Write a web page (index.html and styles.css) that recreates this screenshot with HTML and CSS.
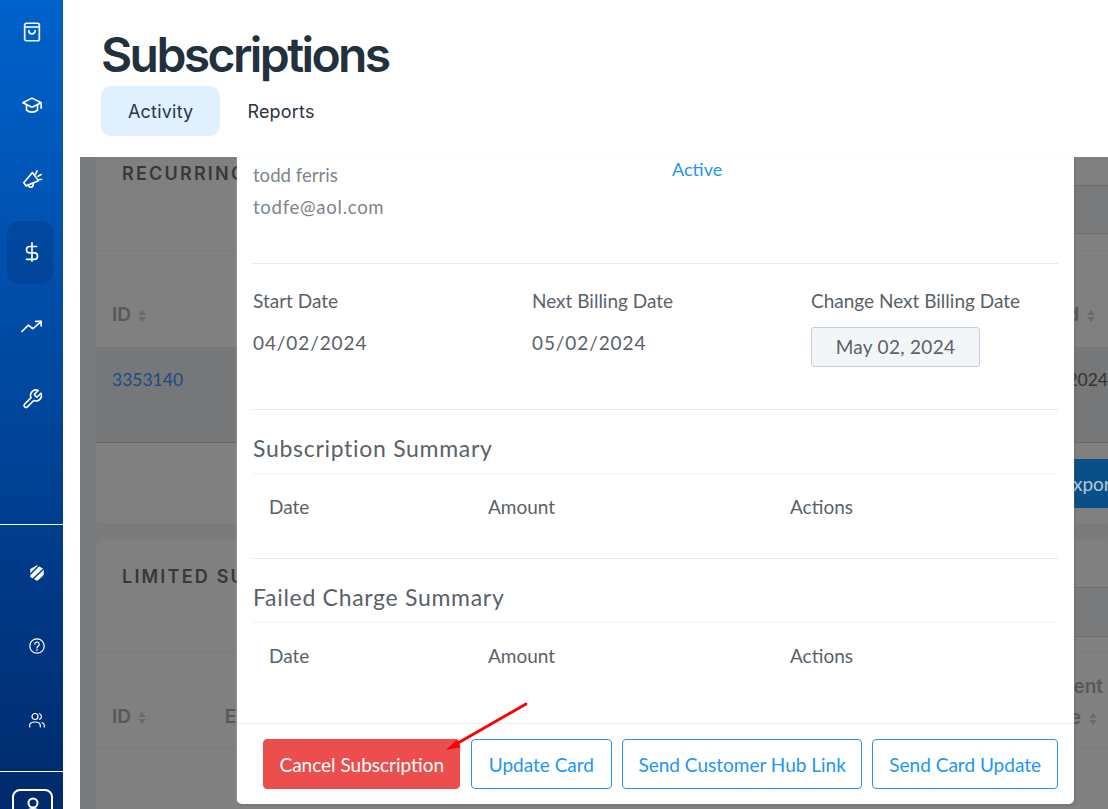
FILE: index.html
```html
<!DOCTYPE html>
<html lang="en">
<head>
<meta charset="utf-8">
<title>Subscriptions</title>
<link rel="stylesheet" href="styles.css">
</head>
<body>
<div class="app">
  <aside class="sidebar">
    <nav class="nav-top">
      <a class="nav-item"><svg class="ico" viewBox="0 0 24 24"><path d="M6 2.500h12a2 2 0 0 1 2 2v15a2 2 0 0 1-2 2H6a2 2 0 0 1-2-2v-15a2 2 0 0 1 2-2zM4 6.500h16M8.500 10.500a3.500 3.500 0 0 0 7 0"/></svg></a>
      <a class="nav-item"><svg class="ico" viewBox="0 0 24 24"><path d="M12 4.500 2 9.500l10 5 10-5zM6 12v5.500c3 3 9 3 12 0V12M22 9.500v6"/></svg></a>
      <a class="nav-item"><svg class="ico" viewBox="0 0 24 24"><path d="M12.500 5 19 14 5.500 19.500 3 16zM8 18.500c.5 3.500 5 3.500 5.500-1M16 6.500l1.500-3.500M18.500 9l3.500-2M20 12.500h2.500"/></svg></a>
      <a class="nav-item active"><svg class="ico" viewBox="0 0 24 24"><path d="M12 2v20M17 6H9.500a3.500 3.500 0 0 0 0 7h5a3.500 3.500 0 0 1 0 7H6"/></svg></a>
      <a class="nav-item"><svg class="ico" viewBox="0 0 24 24"><path d="M1 18l7-7 5 4 9-8M16 7h6v5"/></svg></a>
      <a class="nav-item"><svg class="ico" viewBox="0 0 24 24"><path d="M15 6.500a1 1 0 0 0 0 1.400l1.600 1.600a1 1 0 0 0 1.400 0l3.800-3.800a6 6 0 0 1-7.900 7.900l-6.900 6.900a2.100 2.100 0 0 1-3-3l6.900-6.900a6 6 0 0 1 7.900-7.900z"/></svg></a>
    </nav>
    <nav class="nav-bottom">
      <a class="nav-item small"><svg class="ico-s" viewBox="0 0 16 16"><path class="solid" d="M8 .3 14.700 4v8L8 15.700 1.300 12V4z"/><path class="cut" d="M1 9.500 10.500 0M4 14 15 3.500M10 15.500l5.500-5.500"/></svg></a>
      <a class="nav-item small"><svg class="ico-s" viewBox="0 0 16 16"><circle cx="8" cy="8" r="7.200"/><path d="M5.800 6.200a2.200 2.200 0 1 1 3.400 1.900C8.400 8.600 8 9 8 10M8 11.500v1"/></svg></a>
      <a class="nav-item small"><svg class="ico-s" viewBox="0 0 16 16"><circle cx="6" cy="4.500" r="3"/><path d="M.7 15v-1.500C.7 11 2.500 10 6 10s5.300 1 5.300 3.500V15M10.500 1.700a3 3 0 0 1 0 5.600M13 10.500c1.500.5 2.300 1.500 2.300 3V15"/></svg></a>
    </nav>
    <div class="profile"><svg class="ico-p" viewBox="0 0 16 16"><circle cx="8" cy="6" r="4.500"/><path d="M1 18c0-4 3-6 7-6s7 2 7 6"/></svg></div>
  </aside>
  <main class="main">
    <header class="header">
      <h1 class="title">Subscriptions</h1>
      <div class="tabs">
        <a class="tab tab-on">Activity</a>
        <a class="tab">Reports</a>
      </div>
    </header>
    <section class="content">
      <div class="card card-a">
        <div class="card-head">
          <h2 class="card-title">RECURRING</h2>
          <div class="search"></div>
        </div>
        <div class="thead">
          <span class="th">ID <i class="sort"></i></span>
          <span class="th th-right"><b class="th-cut">d</b><i class="sort"></i></span>
        </div>
        <div class="trow">
          <a class="cell-id">3353140</a>
          <span class="cell-end">2024</span>
        </div>
        <div class="card-foot"><span class="export">Export</span></div>
      </div>
      <div class="card card-b">
        <div class="card-head">
          <h2 class="card-title">LIMITED SUBSCRIPTIONS</h2>
          <div class="search"></div>
        </div>
        <div class="thead">
          <span class="th">ID <i class="sort"></i></span>
          <span class="th th-e">Email</span>
          <span class="th th-two">Payment<br><span class="th-date">Date<i class="sort"></i></span></span>
        </div>
      </div>
    </section>
    <div class="modal">
      <div class="modal-body">
        <div class="row-customer">
          <div class="cust">
            <p class="cust-line">todd ferris</p>
            <p class="cust-line cust-mail">todfe@aol.com</p>
          </div>
          <div class="status">Active</div>
        </div>
        <div class="row-dates">
          <div class="col"><div class="lbl">Start Date</div><div class="val">04/02/2024</div></div>
          <div class="col"><div class="lbl">Next Billing Date</div><div class="val">05/02/2024</div></div>
          <div class="col"><div class="lbl">Change Next Billing Date</div><div class="date-input">May 02, 2024</div></div>
        </div>
        <div class="summary">
          <h3 class="sum-title">Subscription Summary</h3>
          <div class="sum-head"><span>Date</span><span>Amount</span><span>Actions</span></div>
        </div>
        <div class="summary summary-last">
          <h3 class="sum-title">Failed Charge Summary</h3>
          <div class="sum-head"><span>Date</span><span>Amount</span><span>Actions</span></div>
        </div>
      </div>
      <div class="modal-foot">
        <button class="btn btn-danger">Cancel Subscription</button>
        <button class="btn btn-update">Update Card</button>
        <button class="btn btn-hub">Send Customer Hub Link</button>
        <button class="btn">Send Card Update</button>
      </div>
    </div>
    <svg class="arrow" viewBox="0 0 90 60" width="90" height="60"><path class="arrow-line" d="M85 4 17 43"/><path class="arrow-head" d="M5 50 15.300 40 19.700 47.300z"/></svg>
  </main>
</div>
</body>
</html>
```
FILE: styles.css
```css
* { box-sizing: border-box; }
html, body { margin: 0; height: 100%; overflow: hidden; background: #fff; }
.app { display: flex; height: 809px; font-family: "Lato", "Noto Sans", sans-serif; }

.sidebar { width: 63px; flex: none; height: 809px; overflow: hidden; display: flex; flex-direction: column; background: linear-gradient(180deg, #0062cc 0%, #002a6c 100%); }
.nav-top { flex: none; height: 525px; border-bottom: 1px solid #fff; display: flex; flex-direction: column; align-items: flex-start; padding-left: 7px; }
.nav-item { flex: none; display: flex; align-items: center; justify-content: center; width: 46px; height: 63px; padding-left: 3px; margin-bottom: 10.500px; border-radius: 12px; }
.nav-item.active { background: rgba(0, 40, 100, .25); }
.ico { width: 22px; height: 22px; fill: none; stroke: #fff; stroke-width: 1.800; stroke-linecap: round; stroke-linejoin: round; }
.ico-s { width: 16px; height: 16px; fill: none; stroke: #fff; stroke-width: 1.200; stroke-linecap: round; }
.ico-s .solid { fill: #fff; stroke: none; }
.ico-s .cut { stroke: #003f8c; stroke-width: 1.500; stroke-linecap: butt; }
.ico-p { width: 16px; height: 16px; fill: none; stroke: #fff; stroke-width: 2; }
.nav-bottom { flex: none; height: 247px; border-bottom: 1px solid #fff; display: flex; flex-direction: column; align-items: flex-start; padding: 16px 0 0 7px; }
.nav-item.small { padding-left: 13px; }
.profile { flex: none; width: 41px; height: 40px; margin: 17px 0 0 12px; border: 2px solid #fff; border-radius: 8px; display: flex; justify-content: center; padding-top: 6px; }

.main { flex: 1; min-width: 0; position: relative; display: flex; flex-direction: column; }
.header { flex: none; height: 157px; padding: 29px 0 0 38px; background: #fff; }
.title { margin: 0; font: 600 48px/52px "Inter", sans-serif; letter-spacing: -2.600px; color: #23303e; }
.tabs { display: flex; margin-top: 5px; }
.tab { height: 50px; padding: 0 27px; display: flex; align-items: center; border-radius: 10px; font: 400 18px "Inter", sans-serif; letter-spacing: .2px; color: #2b3540; }
.tab-on { background: #e0f0ff; }

.content { flex: 1; min-height: 0; margin-left: 17px; background: #7a7b7c; padding-left: 16px; overflow: hidden; }
.card { background: #808080; border-radius: 6px; border-bottom: 1px solid #777879; }
.card-a { height: 368px; border-radius: 0 0 6px 6px; }
.card-b { margin-top: 15px; height: 300px; }
.card-head { display: flex; justify-content: space-between; align-items: flex-start; height: 94px; border-bottom: 1px solid #797a7b; }
.card-b .card-head { height: 113px; }
.card-title { margin: 3px 0 0 26px; width: 115px; overflow: hidden; font: 600 18px/27px "Inter", sans-serif; letter-spacing: 2.200px; color: #36383a; white-space: nowrap; }
.card-b .card-title { margin-top: 23px; }
.search { width: 40px; height: 49px; margin-top: 28px; background: #797a7b; border: solid #6c6d6e; border-width: 1px 0; }
.card-b .search { margin-top: 47px; height: 50px; }
.thead { display: flex; justify-content: space-between; align-items: center; height: 96px; padding: 30px 0 0 16px; }
.card-b .thead { padding-top: 32px; border-bottom: 1px solid #797a7b; }
.th { font: 600 19px "Inter", sans-serif; color: #565859; white-space: nowrap; }
.sort { display: inline-block; position: relative; vertical-align: -1px; width: 8px; height: 12px; margin-left: 2px; }
.sort::before, .sort::after { content: ""; position: absolute; left: 0; border: solid transparent; border-width: 0 4px; }
.sort::before { top: 0; border-bottom: 5px solid #6a6b6c; }
.sort::after { bottom: 0; border-top: 5px solid #6a6b6c; }
.th-right { margin-right: 13px; }
.th-right .sort, .th-date .sort { margin-left: 8px; }
.th-cut { font-weight: 600; }
.th-e { margin-left: 79px; margin-right: auto; }
.th-two { align-self: flex-start; margin: -14px 5px 0 0; line-height: 31px; text-align: right; }
.th-date { margin-right: 6px; }
.trow { height: 96px; background: #767778; border-bottom: 1px solid #666; display: flex; justify-content: space-between; padding: 22px 0 0 16px; }
.cell-id { color: #1b4b85; font-size: 17.500px; line-height: 22px; }
.cell-end { color: #333; font-size: 17.500px; line-height: 22px; }
.card-foot { display: flex; justify-content: flex-end; padding-top: 16px; }
.export { width: 80px; height: 49px; margin-right: -12px; padding-left: 22px; background: #0a4f86; color: #b8c7d6; font-size: 19px; line-height: 49px; white-space: nowrap; overflow: hidden; }

.modal { position: absolute; left: 174px; top: 157px; width: 837px; height: 647px; background: #fff; border-radius: 0 0 5px 5px; box-shadow: 0 0 2px rgba(255,255,255,.5), 1px 1px 2px rgba(0,0,0,.3); display: flex; flex-direction: column; color: #5a6269; }
.modal-body { flex: 1; min-height: 0; padding: 0 16px; }
.row-customer { height: 107px; border-bottom: 1px solid #e6e8ea; display: flex; }
.cust { width: 419px; padding-top: 2px; }
.cust-line { margin: 0; font-size: 18.600px; line-height: 32px; height: 32px; color: #7b858e; }
.cust-mail { letter-spacing: .7px; }
.status { color: #2196f3; font-size: 18px; line-height: 24px; }
.row-dates { height: 146px; border-bottom: 1px solid #e6e8ea; display: flex; padding-top: 25px; }
.col { flex: none; width: 279px; }
.lbl { font-size: 19px; line-height: 24px; }
.val { font-size: 19px; line-height: 24px; margin-top: 18px; letter-spacing: .9px; }
.date-input { width: 169px; height: 40px; margin-top: 14px; background: #f3f6f9; border: 1px solid #c5d0dc; border-radius: 3px; text-align: center; font-size: 19px; line-height: 38px; letter-spacing: .3px; }
.summary { height: 149px; border-bottom: 1px solid #e6e8ea; }
.summary-last { border-bottom: 0; height: 164px; }
.sum-title { margin: 0; height: 64px; border-bottom: 1px solid #f2f3f4; padding-top: 23px; font-size: 23px; font-weight: 400; line-height: 30px; letter-spacing: .7px; }
.sum-head { display: flex; padding: 21px 0 0 16px; font-size: 19px; line-height: 24px; }
.sum-head span:nth-child(1) { width: 219px; }
.sum-head span:nth-child(2) { width: 302px; }
.modal-foot { flex: none; height: 81px; border-top: 1px solid #eff0f1; padding: 15px 16px 0 0; display: flex; gap: 10.500px; justify-content: flex-end; }
.btn { height: 50px; padding: 0 16px; background: #fff; border: 1px solid #2196f3; border-radius: 4px; color: #2196f3; font: 19px "Lato", sans-serif; white-space: nowrap; }
.btn-danger { padding: 0 15px; background: #ec4e4e; border-color: #ec4e4e; color: #fff; }
.btn-update { padding: 0 17px; }
.btn-hub { padding: 0 15px; }
.arrow { position: absolute; left: 378px; top: 700px; }
.arrow-line { stroke: #f00; stroke-width: 2.800; stroke-linecap: round; fill: none; }
.arrow-head { fill: #f00; }
```
